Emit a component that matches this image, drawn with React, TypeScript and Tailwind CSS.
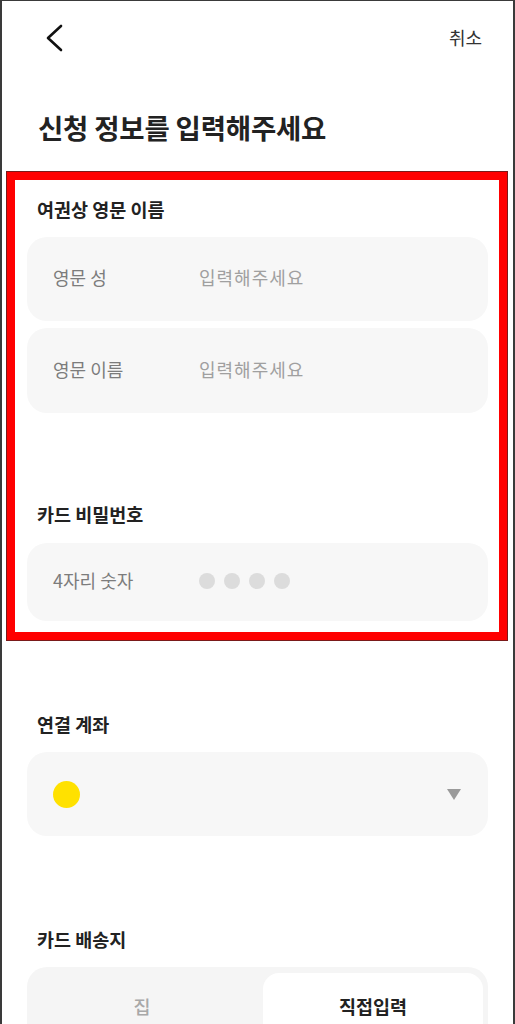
import React from "react";

const font = { fontFamily: '"Noto Sans CJK KR", "Noto Sans", sans-serif' };

function Field({ label, children, h }: { label: string; children: React.ReactNode; h: string }) {
  return (
    <div className={`flex items-center rounded-[20px] bg-[#f7f7f7] pb-[3px] pl-[26px] ${h}`}>
      <span className="w-[146px] text-[18px] text-[#7c7c7c]">{label}</span>
      {children}
    </div>
  );
}

export default function App() {
  return (
    <div
      style={font}
      className="relative h-[1024px] w-[515px] overflow-hidden border-l-2 border-r-2 border-t border-[#3a3a3a] bg-white text-[#1e1e1e]"
    >
      {/* header */}
      <div className="flex h-[73px] items-center justify-between pl-[43px] pr-[31px]">
        <svg width="18" height="28" viewBox="0 0 18 28" fill="none">
          <path d="M16 2 L3 14 L16 26" stroke="#111" strokeWidth="2.6" strokeLinecap="round" strokeLinejoin="round" />
        </svg>
        <span className="text-[18px] text-[#333]">취소</span>
      </div>

      <h1 className="mt-[36px] h-[34px] pl-[36px] text-[27.5px] font-bold leading-[34px] tracking-[-0.2px] text-[#222]">
        신청 정보를 입력해주세요
      </h1>

      <div className="px-[25px]">
        <div className="relative mt-[53px]">
          <div className="pointer-events-none absolute -left-[20px] -right-[19px] -top-[25px] -bottom-[19px] border-[8px] border-[#ff0000] shadow-[0_0_0_1px_#7a1a1a]" />
          <div className="h-[24px] pl-[10px] text-[18.5px] font-bold leading-[24px] text-[#222]">여권상 영문 이름</div>
          <div className="mt-[16px] flex flex-col gap-[7px]">
            <Field label="영문 성" h="h-[84px]">
              <span className="text-[18px] tracking-[1px] text-[#a0a0a0]">입력해주세요</span>
            </Field>
            <Field label="영문 이름" h="h-[85px]">
              <span className="text-[18px] tracking-[1px] text-[#a0a0a0]">입력해주세요</span>
            </Field>
          </div>
          <div className="mt-[89px] h-[24px] pl-[10px] text-[18.5px] font-bold leading-[24px] text-[#222]">카드 비밀번호</div>
          <div className="mt-[17px]">
            <Field label="4자리 숫자" h="h-[78px]">
              <div className="flex gap-[9px]">
                <span className="h-[16px] w-[16px] rounded-full bg-[#dcdcdc]" />
                <span className="h-[16px] w-[16px] rounded-full bg-[#dcdcdc]" />
                <span className="h-[16px] w-[16px] rounded-full bg-[#dcdcdc]" />
                <span className="h-[16px] w-[16px] rounded-full bg-[#dcdcdc]" />
              </div>
            </Field>
          </div>
        </div>

        <div className="mt-[91px] h-[24px] pl-[10px] text-[18.5px] font-bold leading-[24px] text-[#222]">연결 계좌</div>
        <div className="mt-[16px] flex h-[84px] items-center justify-between rounded-[20px] bg-[#f7f7f7] pl-[26px] pr-[27px]">
          <span className="h-[27px] w-[27px] rounded-full bg-[#ffe100]" />
          <svg width="14" height="11" viewBox="0 0 14 11">
            <path d="M0 0 H14 L7 11 Z" fill="#9a9a9a" />
          </svg>
        </div>

        <div className="mt-[91px] h-[24px] pl-[10px] text-[18.5px] font-bold leading-[24px] text-[#222]">카드 배송지</div>
        <div className="mt-[16px] flex h-[80px] rounded-[20px] bg-[#f5f5f5] pb-[6px] pl-[6px] pr-[5px] pt-[6px]">
          <div className="flex flex-1 items-center justify-center pr-[12px] text-[18.5px] font-medium text-[#a8a8a8]">집</div>
          <div className="flex w-[220px] items-center justify-center rounded-[16px] bg-white text-[18.5px] font-bold text-[#222]">
            직접입력
          </div>
        </div>
      </div>
    </div>
  );
}
